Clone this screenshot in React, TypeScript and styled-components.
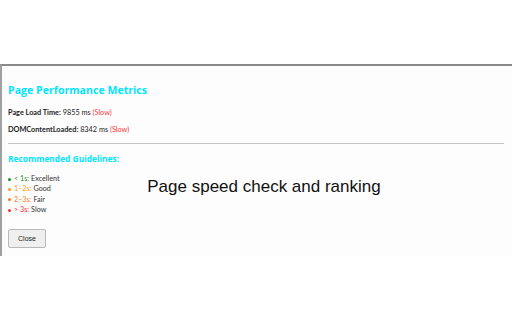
import React from "react";
import styled, { createGlobalStyle } from "styled-components";

const Global = createGlobalStyle`
  html, body { margin: 0; padding: 0; background: #ffffff; }
  body { font-family: "Lato", "Noto Sans", sans-serif; }
`;

const Page = styled.div`
  position: relative;
  width: 512px;
  height: 320px;
  overflow: hidden;
  background: #ffffff;
`;

const Panel = styled.section`
  margin-top: 64px;
  height: 192px;
  border-top: 2px solid #8a8a8a;
  border-left: 2px solid #a0a0a0;
  background: #fdfdfd;
  padding: 17px 8px 0 6px;
  box-sizing: border-box;
  display: flex;
  flex-direction: column;
`;

const Title = styled.h1`
  margin: 0;
  font-family: "Open Sans", "Lato", sans-serif;
  font-weight: 700;
  font-size: 10.5px;
  line-height: 14px;
  color: #00e5ff;
  letter-spacing: 0.05px;
`;

const Metric = styled.p<{ $top: number }>`
  margin: 0;
  font-size: 7.3px;
  line-height: 10px;
  color: #222;
  margin-top: ${(p) => p.$top}px;
`;

const Label = styled.b`
  font-weight: 700;
`;

const Slow = styled.span`
  color: #ff3b3b;
`;

const Rule = styled.hr`
  margin: 8px 0 0 0;
  border: none;
  border-top: 1px solid #c4c4c4;
  width: 496px;
`;

const SubTitle = styled.h2`
  margin: 9px 0 0 0;
  font-family: "Open Sans", "Lato", sans-serif;
  font-weight: 700;
  font-size: 8.4px;
  line-height: 12px;
  color: #00e5ff;
`;

const List = styled.ul`
  list-style: none;
  margin: 9px 0 0 0;
  padding: 0;
  display: flex;
  flex-direction: column;
  gap: 0.4px;
`;

const Item = styled.li<{ $color: string }>`
  font-size: 7.2px;
  line-height: 10px;
  color: #333;
  display: flex;
  align-items: center;
  &::before {
    content: "";
    width: 3px;
    height: 3px;
    border-radius: 50%;
    background: ${(p) => p.$color};
    margin-right: 3px;
  }
`;

const Range = styled.span<{ $color: string }>`
  color: ${(p) => p.$color};
  margin-right: 2px;
`;

const CloseButton = styled.button`
  margin-top: 14px;
  width: 38px;
  height: 19px;
  border: 1px solid #b8b8b8;
  border-radius: 2px;
  background: #efefef;
  font-family: "Liberation Sans", Arial, sans-serif;
  font-size: 7px;
  color: #222;
  padding: 0;
  cursor: pointer;
`;

const Caption = styled.div`
  position: absolute;
  left: 0;
  right: 0;
  top: 176px;
  text-align: center;
  font-family: "Liberation Sans", Arial, sans-serif;
  font-size: 17px;
  line-height: 22px;
  color: #111;
  padding-left: 16px;
`;

const guidelines = [
  { range: "< 1s:", label: "Excellent", color: "#1f8a1f" },
  { range: "1–2s:", label: "Good", color: "#ff9a1a" },
  { range: "2–3s:", label: "Fair", color: "#ff7a1a" },
  { range: "> 3s:", label: "Slow", color: "#ff2a2a" },
];

export default function App() {
  return (
    <Page>
      <Global />
      <Panel>
        <Title>Page Performance Metrics</Title>
        <Metric $top={11}>
          <Label>Page Load Time:</Label> 9855 ms <Slow>(Slow)</Slow>
        </Metric>
        <Metric $top={7}>
          <Label>DOMContentLoaded:</Label> 8342 ms <Slow>(Slow)</Slow>
        </Metric>
        <Rule />
        <SubTitle>Recommended Guidelines:</SubTitle>
        <List>
          {guidelines.map((g) => (
            <Item key={g.range} $color={g.color}>
              <Range $color={g.color}>{g.range}</Range>
              {g.label}
            </Item>
          ))}
        </List>
        <CloseButton>Close</CloseButton>
      </Panel>
      <Caption>Page speed check and ranking</Caption>
    </Page>
  );
}
